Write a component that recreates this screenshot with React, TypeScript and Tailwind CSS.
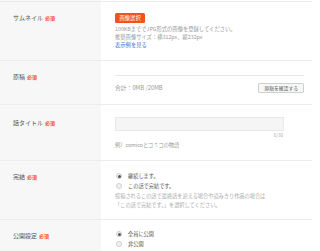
import React from "react";

const Req = () => (
  <span className="ml-[2px] text-[5px] font-bold text-[#ff4545]">必須</span>
);

function Row({
  label,
  h,
  labelPt = 12,
  children,
}: {
  label: string;
  h: string;
  labelPt?: number;
  children: React.ReactNode;
}) {
  return (
    <div className={`flex border-b border-[#ececec] ${h}`}>
      <div
        className="w-[101px] shrink-0 bg-[#f7f7f7] pl-[13px] text-[6px] leading-[8px] text-[#555]"
        style={{ paddingTop: labelPt }}
      >
        {label}
        <Req />
      </div>
      <div className="flex-1 pl-[14px] pt-[11px] pr-[8px]">{children}</div>
    </div>
  );
}

const Radio = ({ on, label }: { on?: boolean; label: string }) => (
  <div className="flex h-[10px] items-center pl-[1px]">
    <span className="flex h-[6px] w-[6px] items-center justify-center rounded-full border border-[#cfcfcf] bg-[#f2f2f2]">
      {on && <span className="h-[3px] w-[3px] rounded-full bg-[#555]" />}
    </span>
    <span className="ml-[6px] text-[5.2px] text-[#555]">{label}</span>
  </div>
);

export default function App() {
  return (
    <div
      className="h-[251px] w-[320px] overflow-hidden bg-white"
      style={{ fontFamily: '"Noto Sans CJK JP", "Noto Sans", sans-serif' }}
    >
      <div className="w-[312px]">
        <div className="h-[1px] bg-[#f7f7f7] w-[101px]" />
        <div className="border-t border-[#ececec]">
          <Row label="サムネイル" h="h-[59px]">
            <div className="flex">
              <span className="rounded-[1.5px] bg-[#f4511e] px-[4.5px] text-[5.3px] leading-[10px] text-white">
                画像選択
              </span>
            </div>
            <div className="mt-[2px] text-[5.3px] leading-[8px] text-[#999]">
              <div>100KBまででJPG形式の画像を登録してください。</div>
              <div>推奨画像サイズ：横312px、縦232px</div>
              <div className="text-[#3b6fd6]">表示例を見る</div>
            </div>
          </Row>
          <Row label="原稿" h="h-[44px]" labelPt={12}>
            <div className="mt-[3px] border-t border-[#e6e6e6]" />
            <div className="mt-[7px] flex items-center justify-between">
              <span className="text-[5.8px] leading-[8px] text-[#999]">
                合計：0MB /20MB
              </span>
              <span className="rounded-[1px] border border-[#cfcfcf] bg-[#f7f7f7] px-[5px] text-[4.8px] leading-[8px] text-[#555]">
                原稿を確認する
              </span>
            </div>
          </Row>
          <Row label="話タイトル" h="h-[56px]" labelPt={14}>
            <div className="mr-[20px]">
              <div className="mt-[1px] h-[14px] border border-[#e8e8e8] bg-[#f5f5f5]" />
              <div className="pr-[1px] text-right text-[4.5px] leading-[8px] text-[#aaa]">
                0/30
              </div>
            </div>
            <div className="mt-[2px] text-[5.2px] leading-[8px] text-[#999]">
              例）comicoとコミコの物語
            </div>
          </Row>
          <Row label="完結" h="h-[59px]">
            <div className="mt-[-1px]">
              <Radio on label="継続します。" />
              <Radio label="この話で完結です。" />
              <div className="text-[5.2px] leading-[9px] text-[#aaa]">
                <div>投稿されるこの話で最終話を迎える場合や読みきり作品の場合は</div>
                <div>「この話で完結です。」を選択してください。</div>
              </div>
            </div>
          </Row>
          <Row label="公開設定" h="h-[40px]">
            <div className="mt-[-2px]">
              <Radio on label="全員に公開" />
              <Radio label="非公開" />
            </div>
          </Row>
        </div>
      </div>
    </div>
  );
}
